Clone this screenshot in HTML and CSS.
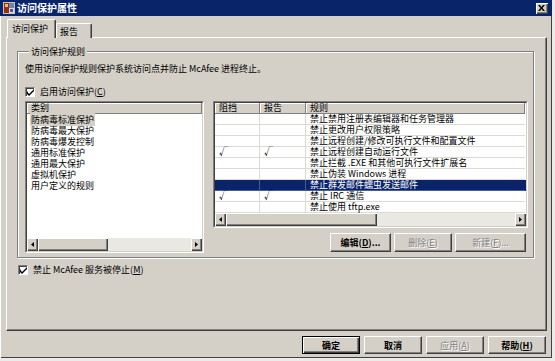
FILE: index.html
```html
<!DOCTYPE html>
<html lang="zh">
<head>
<meta charset="utf-8">
<title>访问保护属性</title>
<link rel="stylesheet" href="styles.css">
</head>
<body>
<div class="window">
  <div class="titlebar">
    <svg class="appicon" width="12" height="12" viewBox="0 0 12 12">
      <rect x="0" y="0" width="12" height="12" fill="#c8c4bc"/>
      <rect x="1" y="1" width="5" height="10" fill="#9c2a1c"/>
      <rect x="2" y="2" width="3" height="3" fill="#e8c440"/>
      <rect x="6" y="1" width="5" height="5" fill="#6c84b4"/>
      <rect x="6" y="6" width="5" height="5" fill="#e0dcd4"/>
      <rect x="7" y="7" width="3" height="3" fill="#3c5c9c"/>
    </svg>
    <span class="title">访问保护属性</span>
    <span class="close">
      <svg width="7" height="6" viewBox="0 0 7 6"><path d="M0 0h2l1.5 2L5 0h2L4.5 3 7 6H5L3.5 4 2 6H0l2.5-3z" fill="#000"/></svg>
    </span>
  </div>

  <div class="tabs">
    <div class="tab active">访问保护</div>
    <div class="tab">报告</div>
  </div>

  <div class="panel">
    <div class="group">
      <div class="legend">访问保护规则</div>
      <div class="desc">使用访问保护规则保护系统访问点并防止 McAfee 进程终止。</div>
      <div class="check top">
        <span class="box"><svg width="7" height="7" viewBox="0 0 7 7"><path d="M0 2v3l2 2 5-5V-0L2 5z" fill="#000"/></svg></span>
        <span>启用访问保护(<u>C</u>)</span>
      </div>

      <div class="lists">
        <div class="sunken cat">
          <div class="inner">
            <div class="head"><div class="hcell full">类别</div></div>
            <div class="items">
              <div class="item"><span class="sel">防病毒标准保护</span></div>
              <div class="item"><span>防病毒最大保护</span></div>
              <div class="item"><span>防病毒爆发控制</span></div>
              <div class="item"><span>通用标准保护</span></div>
              <div class="item"><span>通用最大保护</span></div>
              <div class="item"><span>虚拟机保护</span></div>
              <div class="item"><span>用户定义的规则</span></div>
            </div>
            <div class="hscroll">
              <span class="arrow"><svg width="3" height="5" viewBox="0 0 3 5"><path d="M3 0v5L0 2.5z" fill="#000"/></svg></span>
              <span class="thumb small"></span>
              <span class="track"></span>
              <span class="arrow"><svg width="3" height="5" viewBox="0 0 3 5"><path d="M0 0v5l3-2.5z" fill="#000"/></svg></span>
            </div>
          </div>
        </div>

        <div class="rightcol">
          <div class="sunken rules">
            <div class="inner">
              <div class="head grid">
                <div class="hcell">阻挡</div>
                <div class="hcell">报告</div>
                <div class="hcell">规则</div>
              </div>
              <div class="rows">
                <div class="row grid"><div class="c"></div><div class="c"></div><div class="c">禁止禁用注册表编辑器和任务管理器</div></div>
                <div class="row grid"><div class="c"></div><div class="c"></div><div class="c">禁止更改用户权限策略</div></div>
                <div class="row grid"><div class="c"></div><div class="c"></div><div class="c">禁止远程创建/修改可执行文件和配置文件</div></div>
                <div class="row grid"><div class="c">√</div><div class="c">√</div><div class="c">禁止远程创建自动运行文件</div></div>
                <div class="row grid"><div class="c"></div><div class="c"></div><div class="c">禁止拦截 .EXE 和其他可执行文件扩展名</div></div>
                <div class="row grid"><div class="c"></div><div class="c"></div><div class="c">禁止伪装 Windows 进程</div></div>
                <div class="row grid selected"><div class="c"></div><div class="c"></div><div class="c">禁止群发邮件蠕虫发送邮件</div></div>
                <div class="row grid"><div class="c">√</div><div class="c">√</div><div class="c">禁止 IRC 通信</div></div>
                <div class="row grid"><div class="c"></div><div class="c"></div><div class="c">禁止使用 tftp.exe</div></div>
              </div>
              <div class="hscroll">
                <span class="arrow"><svg width="3" height="5" viewBox="0 0 3 5"><path d="M3 0v5L0 2.5z" fill="#000"/></svg></span>
                <span class="thumb wide"></span>
                <span class="track"></span>
                <span class="arrow"><svg width="3" height="5" viewBox="0 0 3 5"><path d="M0 0v5l3-2.5z" fill="#000"/></svg></span>
              </div>
            </div>
          </div>
          <div class="btnrow">
            <span class="btn edit"><span>编辑(<u>D</u>)...</span></span>
            <span class="btn del disabled"><span>删除(<u>E</u>)</span></span>
            <span class="btn new disabled"><span>新建(<u>F</u>)...</span></span>
          </div>
        </div>
      </div>
    </div>

    <div class="check svc">
      <span class="box"><svg width="7" height="7" viewBox="0 0 7 7"><path d="M0 2v3l2 2 5-5V-0L2 5z" fill="#000"/></svg></span>
      <span>禁止 McAfee 服务被停止(<u>M</u>)</span>
    </div>
  </div>

  <div class="footer">
    <span class="btn default"><span>确定</span></span>
    <span class="btn"><span>取消</span></span>
    <span class="btn disabled"><span>应用(<u>A</u>)</span></span>
    <span class="btn"><span>帮助(<u>H</u>)</span></span>
  </div>
</div>
</body>
</html>
```

FILE: styles.css
```css
* { box-sizing: border-box; }
html, body { margin: 0; padding: 0; }
body {
  width: 555px;
  height: 361px;
  overflow: hidden;
  background: #ecebe8;
  font-family: "Noto Sans CJK SC", "Noto Sans", sans-serif;
  font-size: 9px;
  line-height: 11px;
  color: #000;
}
u { text-decoration: underline; text-underline-offset: 1px; }

.window {
  width: 552px;
  height: 358px;
  background: #d4d0c8;
  box-shadow: inset 1px 1px 0 #fff, inset -1px -1px 0 #404040;
  display: flex;
  flex-direction: column;
}

/* title bar */
.titlebar {
  height: 16px;
  flex: none;
  background: #0a246a;
  color: #fff;
  display: flex;
  align-items: center;
  padding: 0 4px 0 3px;
}
.appicon { flex: none; }
.title {
  flex: 1;
  margin-left: 2px;
  font-size: 10px;
  font-weight: bold;
  line-height: 12px;
}
.close {
  width: 12px;
  height: 11px;
  background: #d4d0c8;
  box-shadow: inset 1px 1px 0 #fff, inset -1px -1px 0 #404040, inset -2px -2px 0 #808080;
  display: flex;
  align-items: center;
  justify-content: center;
  padding: 0 1px 1px 0;
}

/* tabs */
.tabs {
  flex: none;
  height: 19px;
  margin: 3px 0 -1px 6px;
  display: flex;
  align-items: flex-end;
  position: relative;
  z-index: 1;
}
.tab {
  height: 15px;
  width: 36px;
  padding: 2px 0 0 3px;
  border-top: 1px solid #fff;
  border-left: 1px solid #fff;
  border-right: 1px solid #404040;
  box-shadow: inset -1px 0 0 #808080;
  border-radius: 2px 2px 0 0;
  background: #d4d0c8;
}
.tab.active {
  height: 19px;
  width: 49px;
  margin-left: 1px;
  padding: 3px 0 0 4px;
}

/* panel */
.panel {
  flex: none;
  margin-left: 6px;
  width: 541px;
  height: 294px;
  border-top: 1px solid #fff;
  border-left: 1px solid #fff;
  border-right: 1px solid #404040;
  border-bottom: 1px solid #404040;
  box-shadow: inset -1px -1px 0 #808080;
  display: flex;
  flex-direction: column;
}

.group {
  margin: 13px 0 0 10px;
  width: 517px;
  height: 207px;
  border: 1px solid #808080;
  box-shadow: 1px 1px 0 #fff, inset 1px 1px 0 #fff;
  padding: 0 5px 0 7px;
  display: flex;
  flex-direction: column;
}
.legend {
  align-self: flex-start;
  margin: -6px 0 0 4px;
  padding: 0 2px;
  background: #d4d0c8;
}
.desc { margin-top: 6px; }

.check {
  display: flex;
  align-items: center;
  gap: 5px;
  height: 11px;
}
.check.top { margin-top: 12px; }
.check.svc { margin: 6px 0 0 11px; }
.box {
  width: 10px;
  height: 10px;
  flex: none;
  background: #fff;
  border-top: 1px solid #808080;
  border-left: 1px solid #808080;
  border-right: 1px solid #fff;
  border-bottom: 1px solid #fff;
  box-shadow: inset 1px 1px 0 #404040;
  display: flex;
  align-items: center;
  justify-content: center;
  padding: 1px 0 0 1px;
}

/* lists */
.lists {
  margin-top: 4px;
  display: flex;
  gap: 9px;
  align-items: flex-start;
}
.sunken {
  border-top: 1px solid #808080;
  border-left: 1px solid #808080;
  border-right: 1px solid #fff;
  border-bottom: 1px solid #fff;
  background: #fff;
}
.sunken .inner {
  height: 100%;
  border-top: 1px solid #404040;
  border-left: 1px solid #404040;
  border-right: 1px solid #d4d0c8;
  border-bottom: 1px solid #d4d0c8;
  display: flex;
  flex-direction: column;
}
.cat { width: 179px; height: 152px; }
.rules { width: 315px; height: 127px; }

.head { height: 11px; flex: none; display: flex; }
.hcell {
  height: 11px;
  background: #d4d0c8;
  border-right: 1px solid #808080;
  border-bottom: 1px solid #808080;
  box-shadow: inset 1px 1px 0 #fff;
  padding-left: 4px;
  line-height: 10px;
  white-space: nowrap;
}
.hcell.full { flex: 1; }

.items { flex: 1; }
.item { height: 11px; padding-left: 3px; white-space: nowrap; }
.item span { padding: 0 1px; }
.item .sel { background: #d4d0c8; }

.grid {
  display: grid;
  grid-template-columns: 45px 46px 219px 1px;
}

.rows { flex: 1; }
.row { height: 11px; }
.row .c {
  height: 11px;
  border-right: 1px solid #dcdad5;
  border-bottom: 1px solid #dcdad5;
  padding-left: 4px;
  line-height: 10px;
  white-space: nowrap;
}
.row .c:nth-child(3) { border-right: none; }
.row.selected { background: #0a246a; color: #fff; }
.row.selected .c { border-color: #4a5c8c; }

.hscroll {
  height: 13px;
  flex: none;
  display: flex;
  background: #eae8e3;
}
.arrow, .thumb {
  flex: none;
  height: 13px;
  background: #d4d0c8;
  box-shadow: inset 1px 1px 0 #fff, inset -1px -1px 0 #404040, inset -2px -2px 0 #808080;
  display: flex;
  align-items: center;
  justify-content: center;
}
.arrow { width: 11px; padding-bottom: 1px; }
.thumb.small { width: 70px; }
.thumb.wide { width: 151px; }
.track { flex: 1; }

.rightcol { display: flex; flex-direction: column; }
.btnrow {
  margin-top: 5px;
  display: flex;
  justify-content: flex-end;
  gap: 3px;
  padding-right: 2px;
}

/* buttons */
.btn {
  height: 19px;
  background: #d4d0c8;
  border-top: 1px solid #fff;
  border-left: 1px solid #fff;
  border-right: 1px solid #404040;
  border-bottom: 1px solid #404040;
  box-shadow: inset -1px -1px 0 #808080;
  display: flex;
  align-items: center;
  justify-content: center;
  font-weight: bold;
  white-space: nowrap;
}
.btn.edit { width: 61px; }
.btn.del { width: 58px; }
.btn.new { width: 71px; }
.btn.disabled {
  color: #808080;
  font-weight: normal;
  text-shadow: 1px 1px 0 #fff;
}

.footer {
  margin-top: 5px;
  display: flex;
  justify-content: flex-end;
  gap: 4px;
  padding-right: 6px;
}
.footer .btn { width: 58px; height: 18px; }
.footer .btn.default {
  border: 1px solid #000;
  box-shadow: inset 1px 1px 0 #fff, inset -1px -1px 0 #404040, inset -2px -2px 0 #808080;
}
```
